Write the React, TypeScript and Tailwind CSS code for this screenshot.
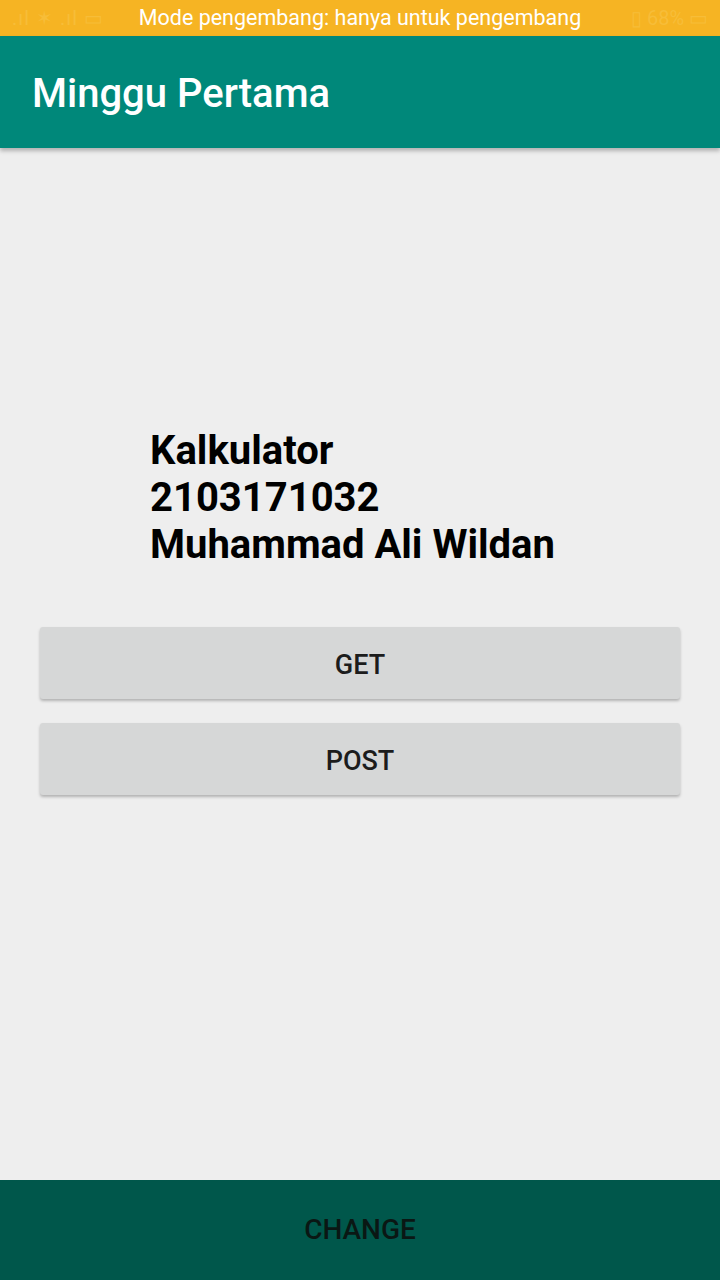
import React from 'react';

// Simple screen: status bar, app bar, info text, two action buttons and a bottom bar.
const App: React.FC = () => {
  return (
    <div className="w-[720px] h-[1280px] flex flex-col bg-[#eeeeee] font-['Roboto',sans-serif] overflow-hidden">
      {/* Status bar with developer mode notice */}
      <div className="h-9 bg-[#f6b423] flex items-center justify-between px-3 relative">
        <span className="text-[20px] text-[#f7bd38] tracking-wider">.ıl ✶ .ıl ▭</span>
        <span className="text-[20px] text-[#f7bd38]">▯ 68% ▭</span>
        <span className="absolute inset-0 flex items-center justify-center text-white text-[21.5px]">
          Mode pengembang: hanya untuk pengembang
        </span>
      </div>

      {/* App bar */}
      <div className="h-[112px] bg-[#00887a] flex items-center px-8 pt-1 shadow-[0_3px_4px_rgba(0,0,0,0.25)] z-10">
        <h1 className="text-white text-[40px] font-medium">Minggu Pertama</h1>
      </div>

      {/* Main content */}
      <div className="flex-1 flex flex-col">
        <div className="pt-[279px] pl-[150px] text-black text-[40px] font-bold leading-[47px]">
          <p>Kalkulator</p>
          <p>2103171032</p>
          <p>Muhammad Ali Wildan</p>
        </div>

        <div className="flex flex-col gap-6 px-10 mt-[59px]">
          <button className="h-[72px] pt-1 bg-[#d6d7d7] rounded-[3px] shadow-[0_2px_3px_rgba(0,0,0,0.25)] text-[#1c1c1c] text-[27px] font-medium">
            GET
          </button>
          <button className="h-[72px] pt-1 bg-[#d6d7d7] rounded-[3px] shadow-[0_2px_3px_rgba(0,0,0,0.25)] text-[#1c1c1c] text-[27px] font-medium">
            POST
          </button>
        </div>
      </div>

      {/* Bottom bar */}
      <div className="h-[100px] bg-[#00574b] flex items-center justify-center">
        <span className="text-[#0a1714] text-[28px] font-medium">CHANGE</span>
      </div>
    </div>
  );
};

export default App;
